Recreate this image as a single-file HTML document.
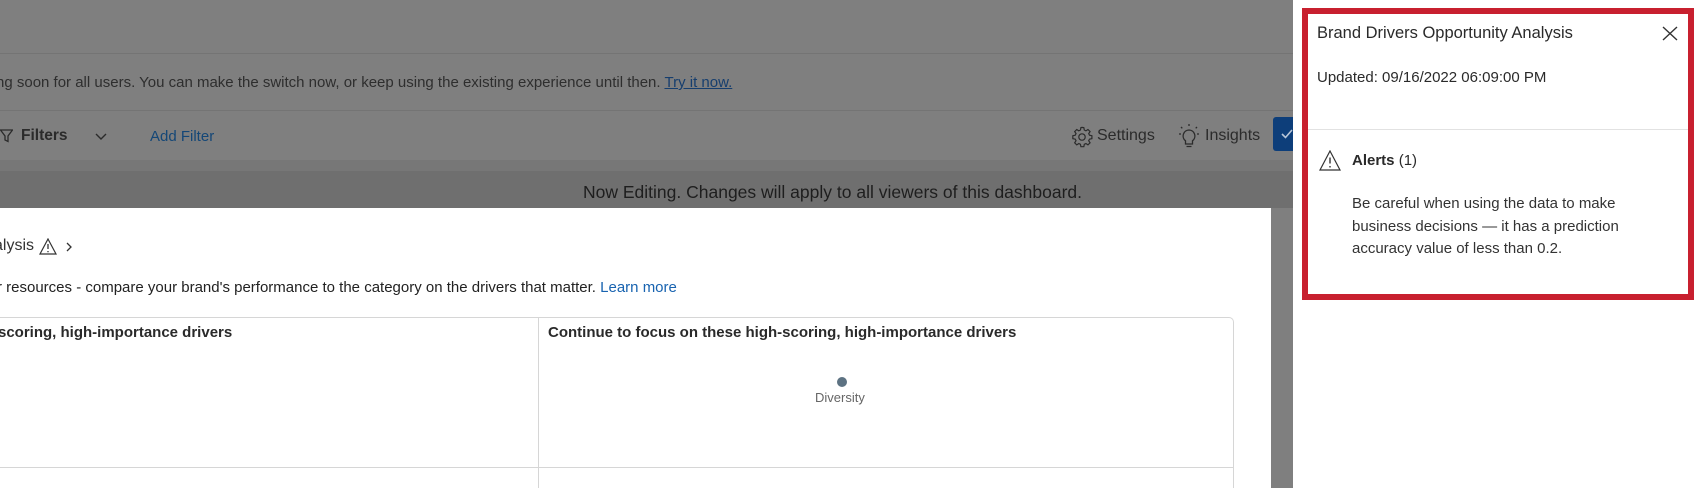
<!DOCTYPE html>
<html style="overflow:hidden;width:1700px;height:488px"><head><meta charset="utf-8"><style>
*{margin:0;padding:0;box-sizing:border-box}
body{width:1700px;height:488px;overflow:hidden;position:relative;background:#7f7f7f;font-family:"Liberation Sans",sans-serif;color:#2b2b2b}
.a{position:absolute;white-space:nowrap}
</style></head><body>
<div class="a" style="left:0;top:0;width:1293px;height:54px;background:#7f7f7f;border-bottom:1px solid #747474"></div>
<div class="a" style="left:0;top:55px;width:1293px;height:56px;background:#7f7f7f;border-bottom:1px solid #747474"></div>
<div class="a" style="left:-4px;top:74px;font-size:15px;color:#2e2e2e">ng soon for all users. You can make the switch now, or keep using the existing experience until then. <span style="color:#163e6e;text-decoration:underline">Try it now.</span></div>
<svg class="a" style="left:0;top:129px" width="13" height="14" viewBox="0 0 13 14"><path d="M0.5 1h12l-4.5 6v5.5l-3-1.5v-4z" fill="none" stroke="#2b2b2b" stroke-width="1.3"/></svg>
<div class="a" style="left:21px;top:127px;font-size:15.5px;font-weight:bold;color:#2b2b2b">Filters</div>
<svg class="a" style="left:95px;top:133px" width="12" height="8"><path d="M1 1l5 5 5-5" fill="none" stroke="#2b2b2b" stroke-width="1.4"/></svg>
<div class="a" style="left:150px;top:128px;font-size:15px;color:#144777">Add Filter</div>
<svg class="a" style="left:1071px;top:126px" width="22" height="22" viewBox="0 0 24 24"><path d="M12 1.5l2 .3.5 2.6 1.8.9 2.2-1.5 2.3 2.3-1.5 2.2.9 1.8 2.6.5v3.2l-2.6.5-.9 1.8 1.5 2.2-2.3 2.3-2.2-1.5-1.8.9-.5 2.6h-3.2l-.5-2.6-1.8-.9-2.2 1.5-2.3-2.3 1.5-2.2-.9-1.8-2.6-.5v-3.2l2.6-.5.9-1.8-1.5-2.2 2.3-2.3 2.2 1.5 1.8-.9.5-2.6z" fill="none" stroke="#2b2b2b" stroke-width="1.3"/><circle cx="12" cy="12" r="3.5" fill="none" stroke="#2b2b2b" stroke-width="1.3"/></svg>
<div class="a" style="left:1097px;top:127px;font-size:16px;color:#2b2b2b">Settings</div>
<svg class="a" style="left:1178px;top:123px" width="22" height="26" viewBox="0 0 22 26"><path d="M11 7a6 6 0 0 0-3.5 10.8V21h7v-3.2A6 6 0 0 0 11 7z M8.5 23.5h5" fill="none" stroke="#2b2b2b" stroke-width="1.3"/><path d="M11 1v2M3 4l1.3 1.3M19 4l-1.3 1.3M1 11h2M19 11h2" stroke="#2b2b2b" stroke-width="1.3"/></svg>
<div class="a" style="left:1205px;top:127px;font-size:16px;color:#2b2b2b">Insights</div>
<div class="a" style="left:1273px;top:117px;width:21px;height:34px;background:#0d3e7a;border-radius:3px 0 0 3px"></div>
<svg class="a" style="left:1281px;top:129px" width="12" height="10"><path d="M1 5l3.5 3.5L11 1" fill="none" stroke="#b8c6d8" stroke-width="1.6"/></svg>
<div class="a" style="left:0;top:160px;width:1293px;height:11px;background:#777"></div>
<div class="a" style="left:0;top:171px;width:1293px;height:37px;background:#6f6f6f"></div>
<div class="a" style="left:583px;top:182px;font-size:17.5px;color:#1e1e1e">Now Editing. Changes will apply to all viewers of this dashboard.</div>
<div class="a" style="left:0;top:208px;width:1271px;height:280px;background:#fff;overflow:hidden">
  <div class="a" style="left:-6px;top:29px;font-size:16px;color:#333">alysis</div>
  <svg class="a" style="left:39px;top:30px" width="18" height="17" viewBox="0 0 18 17"><path d="M9 1L17 16H1z" fill="none" stroke="#333" stroke-width="1.2"/><path d="M9 6v5M9 13v1.3" stroke="#333" stroke-width="1.3"/></svg>
  <svg class="a" style="left:66px;top:34px" width="7" height="10"><path d="M1 1l4 4-4 4" fill="none" stroke="#333" stroke-width="1.3"/></svg>
  <div class="a" style="left:-3px;top:71px;font-size:15px;color:#222">r resources - compare your brand's performance to the category on the drivers that matter. <span style="color:#1863b0">Learn more</span></div>
  <div class="a" style="left:-10px;top:109px;width:1244px;height:171px;border:1px solid #d6d6d6;border-bottom:none;border-radius:5px 5px 0 0"></div>
  <div class="a" style="left:538px;top:109px;width:1px;height:171px;background:#d6d6d6"></div>
  <div class="a" style="left:0;top:259px;width:1234px;height:1px;background:#d6d6d6"></div>
  <div class="a" style="left:-2px;top:116px;font-size:15px;font-weight:bold;color:#2a2a2a">scoring, high-importance drivers</div>
  <div class="a" style="left:548px;top:116px;font-size:15px;font-weight:bold;color:#2a2a2a">Continue to focus on these high-scoring, high-importance drivers</div>
  <div class="a" style="left:837px;top:169px;width:10px;height:10px;border-radius:50%;background:#5d7282"></div>
  <div class="a" style="left:815px;top:182px;font-size:13px;color:#666">Diversity</div>
</div>
<div class="a" style="left:1293px;top:0;width:407px;height:488px;background:#fff"></div>
<div class="a" style="left:1302px;top:129px;width:386px;height:1px;background:#e2e2e2"></div>
<div class="a" style="left:1302px;top:8px;width:392px;height:292px;border:6px solid #c8202f"></div>
<div class="a" style="left:1317px;top:24px;font-size:16.5px;color:#2a2a2a">Brand Drivers Opportunity Analysis</div>
<svg class="a" style="left:1662px;top:26px" width="16" height="15"><path d="M1 1l14 13M15 1L1 14" stroke="#333" stroke-width="1.4"/></svg>
<div class="a" style="left:1317px;top:69px;font-size:15px;color:#2a2a2a">Updated: 09/16/2022 06:09:00 PM</div>
<svg class="a" style="left:1319px;top:150px" width="22" height="21" viewBox="0 0 22 21"><path d="M11 1L21 20H1z" fill="none" stroke="#333" stroke-width="1.2"/><path d="M11 7.5v6M11 16v1.5" stroke="#333" stroke-width="1.4"/></svg>
<div class="a" style="left:1352px;top:152px;font-size:15px;color:#2a2a2a"><b>Alerts</b> (1)</div>
<div class="a" style="left:1352px;top:193px;font-size:15px;line-height:22.5px;color:#333;white-space:normal;width:300px">Be careful when using the data to make business decisions — it has a prediction accuracy value of less than 0.2.</div>
</body></html>
